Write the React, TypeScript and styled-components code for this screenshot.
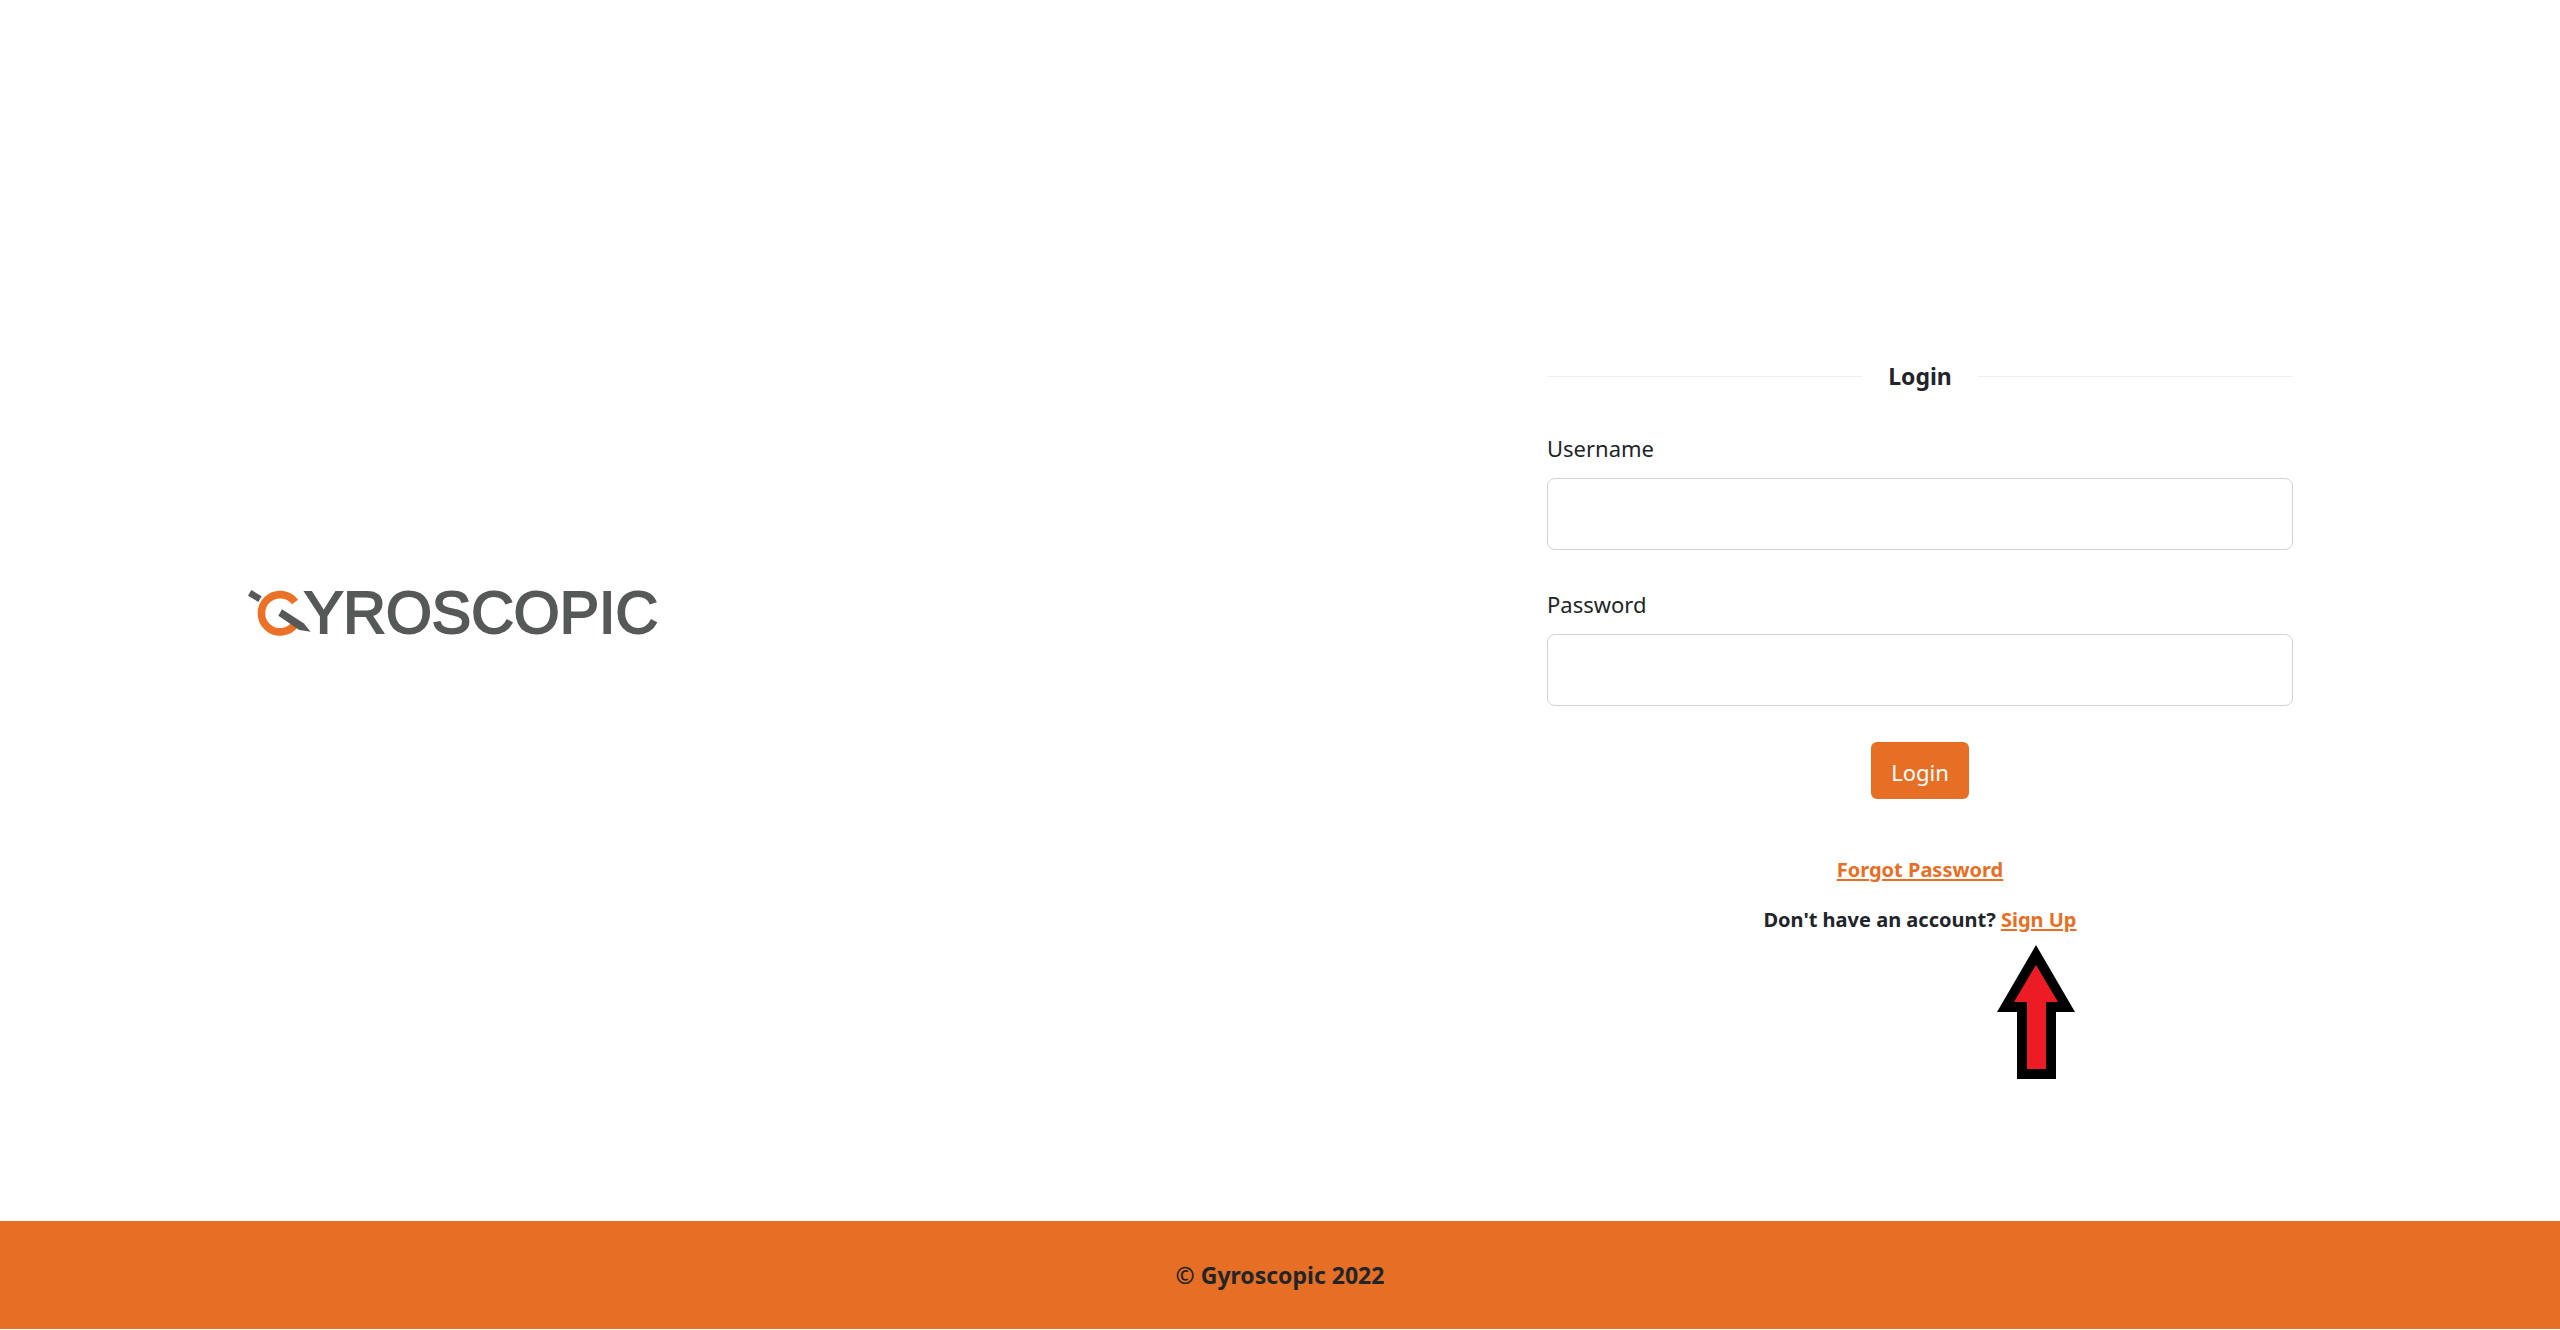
import React from "react";
import styled, { createGlobalStyle } from "styled-components";

const orange = "#e76f25";
const ink = "#212529";

const GlobalStyle = createGlobalStyle`
  *, *::before, *::after { box-sizing: border-box; }
  body {
    margin: 0;
    background: #fff;
    color: ${ink};
    font-family: "Noto Sans", "Open Sans", sans-serif;
    font-size: 22px;
    line-height: 36px;
  }
`;

const Page = styled.div`
  display: flex;
  flex-direction: column;
  min-height: 100vh;
  padding-bottom: 1px;
`;

const Main = styled.main`
  flex: 1;
  display: grid;
  grid-template-columns: 1fr 1fr;
  align-items: center;
`;

const Brand = styled.section`
  padding-left: 248px;
`;

const LogoImage = styled.svg`
  display: block;
  width: 424px;
  height: 88px;
`;

const LogoText = styled.text`
  font-family: "Liberation Sans", Arial, sans-serif;
  font-size: 59px;
  fill: #565958;
  stroke: #565958;
  stroke-width: 2px;
`;

const FormColumn = styled.section`
  padding: 72px 267px 0;
`;

const Form = styled.form`
  display: flex;
  flex-direction: column;
`;

const Heading = styled.h1`
  display: flex;
  align-items: center;
  gap: 26px;
  margin: 0 0 36px;
  font-size: 23px;
  font-weight: 700;

  &::before,
  &::after {
    content: "";
    flex: 1;
    height: 1px;
    background: #eee;
  }
`;

const Field = styled.div`
  display: flex;
  flex-direction: column;
  gap: 12px;
  margin-bottom: 36px;
`;

const TextInput = styled.input`
  width: 100%;
  height: 72px;
  padding: 8px 18px;
  border: 1px solid #ced4da;
  border-radius: 8px;
  background: #fff;
  color: inherit;
  font: inherit;
`;

const SubmitButton = styled.button`
  align-self: center;
  padding: 12px 20px 9px;
  border: 0;
  border-radius: 6px;
  background: ${orange};
  color: #fff;
  font: inherit;
  cursor: pointer;
`;

const Links = styled.div`
  display: flex;
  flex-direction: column;
  align-items: center;
  gap: 20px;
  margin-top: 56px;
  font-size: 20px;
  font-weight: 700;
  line-height: 30px;
`;

const Line = styled.p`
  margin: 0;
`;

const Link = styled.a`
  color: ${orange};
  text-decoration: underline;
  text-decoration-thickness: 2px;
  text-underline-offset: 2px;
`;

const Pointed = styled.span`
  position: relative;
  display: inline-block;
`;

const ArrowImage = styled.svg`
  position: absolute;
  top: 40px;
  right: 2px;
  width: 78px;
  height: 134px;
`;

const Footer = styled.footer`
  display: flex;
  align-items: center;
  justify-content: center;
  padding: 36px;
  background: ${orange};
  font-size: 23px;
  font-weight: 700;
`;

function Logo() {
  return (
    <LogoImage viewBox="0 -20 424 88" role="img" aria-label="Gyroscopic">
      <g transform="translate(-8 -6) scale(0.3333)">
        <path d="M165 63A56 56 0 1 0 166 129" fill="none" stroke="#ea7125" strokeWidth="23" />
        <path d="M34 27L65 46L55 63L24 44Z" fill="#565958" />
        <path d="M126 85L191 127L212 152L178 147L115 104Z" fill="#565958" />
      </g>
      <LogoText x="56" y="46">YROSCOPIC</LogoText>
    </LogoImage>
  );
}

function Arrow() {
  return (
    <ArrowImage viewBox="0 0 78 134" aria-hidden="true">
      <path d="M39 0L78 67H59V134H20V67H0Z" fill="#000" />
      <path d="M39 20L61 57H49V124H30V57H17Z" fill="#ed1c24" />
    </ArrowImage>
  );
}

export default function App() {
  return (
    <>
      <GlobalStyle />
      <Page>
        <Main>
          <Brand>
            <Logo />
          </Brand>
          <FormColumn>
            <Form onSubmit={(event: React.FormEvent) => event.preventDefault()}>
              <Heading>Login</Heading>
              <Field>
                <label htmlFor="username">Username</label>
                <TextInput id="username" type="text" />
              </Field>
              <Field>
                <label htmlFor="password">Password</label>
                <TextInput id="password" type="password" />
              </Field>
              <SubmitButton type="submit">Login</SubmitButton>
            </Form>
            <Links>
              <Link href="#forgot">Forgot Password</Link>
              <Line>
                Don't have an account?{" "}
                <Pointed>
                  <Link href="#signup">Sign Up</Link>
                  <Arrow />
                </Pointed>
              </Line>
            </Links>
          </FormColumn>
        </Main>
        <Footer>© Gyroscopic 2022</Footer>
      </Page>
    </>
  );
}
